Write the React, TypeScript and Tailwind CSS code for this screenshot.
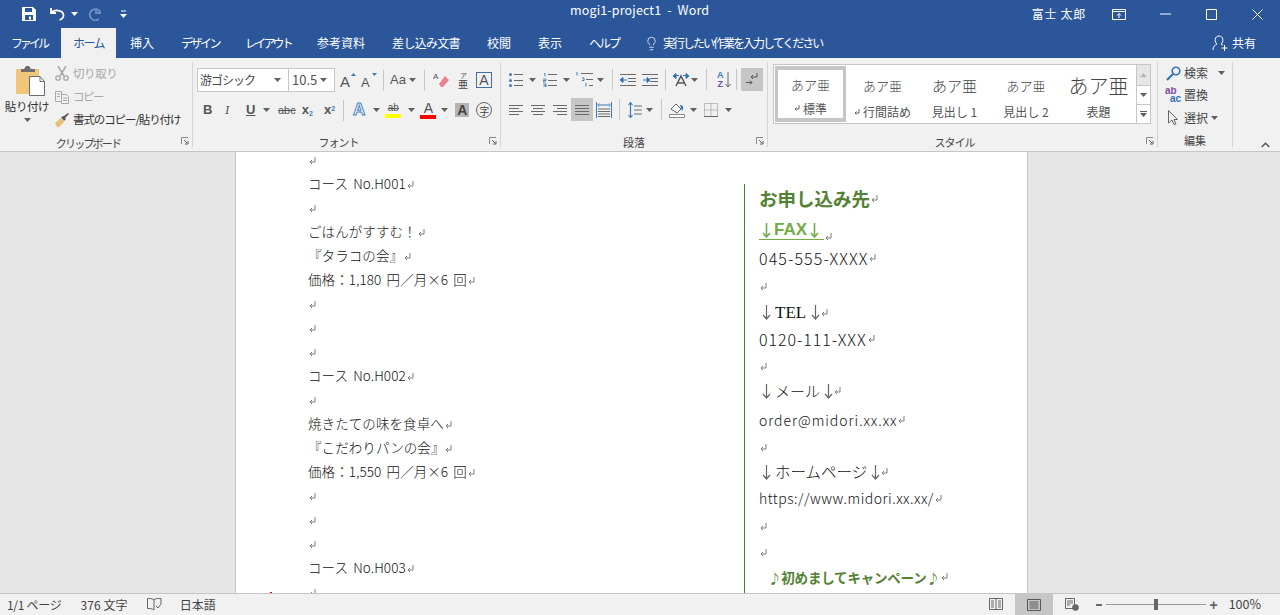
import React from "react";
import { Lightbulb } from "lucide-react";

const FONT = { fontFamily: '"Noto Sans CJK JP", "Liberation Sans", sans-serif' };

type P = { className?: string };

const Caret = ({ className = "", color = "#5f5f5f" }: P & { color?: string }) => (
  <svg className={`shrink-0 ${className}`} width="7" height="4" viewBox="0 0 7 4">
    <path d="M0 0h7L3.500 4z" fill={color} />
  </svg>
);

const Sep = ({ className = "" }: P) => <div className={`w-px h-[21px] bg-[#c6c6c6] shrink-0 ${className}`} />;

// paragraph mark shown at the end of every document line
const Mark = () => (
  <svg className="inline-block ml-px align-baseline shrink-0" width="7" height="8" viewBox="0 0 7 8">
    <path d="M6 0v5H1M3 3L1 5l2 2" fill="none" stroke="#7d7d7d" strokeWidth="1" />
  </svg>
);

// thin down arrow used around the contact headings
const Arrow = ({ className = "", color = "#666", w = 1.2 }: P & { color?: string; w?: number }) => (
  <svg className={`shrink-0 ${className}`} width="9" height="15" viewBox="0 0 9 15">
    <path d="M4.500 0v14M1 10l3.500 4L8 10" fill="none" stroke={color} strokeWidth={w} />
  </svg>
);

// group of horizontal lines, used by the alignment and list buttons
const Lines = ({ className = "", kind = "left" }: P & { kind?: "left" | "center" | "right" | "full" }) => {
  const short = { left: "M0 .5h14M0 3.500h10M0 6.500h14M0 9.500h10", center: "M0 .5h14M2 3.500h10M0 6.500h14M2 9.500h10", right: "M0 .5h14M4 3.500h10M0 6.500h14M4 9.500h10", full: "M0 .5h14M0 3.500h14M0 6.500h14M0 9.500h14" }[kind];
  return (
    <svg className={`shrink-0 ${className}`} width="14" height="10" viewBox="0 0 14 10">
      <path d={short} stroke="#6a6a6a" strokeWidth="1" />
    </svg>
  );
};

const Bullets = ({ className = "" }: P) => (
  <svg className={`shrink-0 ${className}`} width="14" height="14" viewBox="0 0 14 14">
    <path d="M5 1.500h9M5 7.500h9M5 12.500h9" stroke="#6a6a6a" />
    <circle cx="1.500" cy="1.500" r="1.500" fill="#3f7cba" />
    <circle cx="1.500" cy="7.500" r="1.500" fill="#3f7cba" />
    <circle cx="1.500" cy="12.500" r="1.500" fill="#3f7cba" />
  </svg>
);

const Numbering = ({ className = "" }: P) => (
  <svg className={`shrink-0 ${className}`} width="14" height="14" viewBox="0 0 14 14">
    <path d="M5 1.500h9M5 7.500h9M5 12.500h9" stroke="#6a6a6a" />
    <path d="M1 .5h1v3M0 6h3v1.500H0V9h3M0 11h3v3H0M1 12.500h2" fill="none" stroke="#3f7cba" strokeWidth=".9" />
  </svg>
);

const Multilevel = ({ className = "" }: P) => (
  <svg className={`shrink-0 ${className}`} width="18" height="15" viewBox="0 0 18 15">
    <path d="M5 1.500h12M10 7.500h7M13 13.500h4" stroke="#6a6a6a" />
    <path d="M1 0v3.500M6 6h2v2.500H6M10 11v3.500" fill="none" stroke="#3f7cba" strokeWidth="1" />
  </svg>
);

const Indent = ({ className = "", flip = false }: P & { flip?: boolean }) => (
  <svg className={`shrink-0 ${className}`} width="16" height="12" viewBox="0 0 16 12">
    <path d="M0 .5h16M8 4.500h8M8 7.500h8M0 11.500h16" stroke="#6a6a6a" />
    <path d={flip ? "M1 6h4V3.500L8 6 5 8.500V6" : "M7 6H3V3.500L0 6l3 2.500V6"} fill="#2f73b6" stroke="#2f73b6" />
  </svg>
);

const RibbonLabel = ({ children, className = "" }: React.PropsWithChildren<P>) => (
  <div className={`text-[11px] leading-[14px] text-[#444] text-center ${className}`}>{children}</div>
);

const Launcher = ({ className = "" }: P) => (
  <svg className={`absolute right-[3px] bottom-[2px] ${className}`} width="8" height="8" viewBox="0 0 8 8">
    <path d="M.5 7V.5H7" fill="none" stroke="#8a8a8a" />
    <path d="M3 3l3 3M7 4v3H4" fill="none" stroke="#5f5f5f" />
  </svg>
);

function TitleBar() {
  return (
    <div className="h-[28px] flex items-center text-white relative shrink-0">
      <svg className="ml-[22px]" width="14" height="14" viewBox="0 0 14 14">
        <path d="M0 0h11l3 3v11H0z" fill="#fff" />
        <path d="M3 1h7v4H3zM3 8h8v5H3z" fill="#2b579a" />
        <path d="M7 9.500h2v3H7z" fill="#fff" />
      </svg>
      <svg className="ml-[14px]" width="15" height="14" viewBox="0 0 15 14">
        <path d="M1 1v5h5M1.500 5.500C5 2 13 3 13.500 8c.2 2.500-2 4.500-4 5" fill="none" stroke="#fff" strokeWidth="1.800" />
      </svg>
      <Caret className="ml-[6px]" color="#fff" />
      <svg className="ml-[9px]" width="15" height="14" viewBox="0 0 15 14">
        <path d="M9 1v5h5M13.500 5.500A5.600 5.600 0 1 0 12 12" fill="none" stroke="#6f8fbf" strokeWidth="1.800" />
      </svg>
      <svg className="ml-[18px]" width="7" height="8" viewBox="0 0 7 8">
        <path d="M1 1h5" stroke="#fff" />
        <path d="M0 4h7L3.500 8z" fill="#fff" />
      </svg>
      <div className="absolute left-[570px] top-0 text-[12.5px] leading-[20px] whitespace-pre tracking-[0.15px]">mogi1-project1  -  Word</div>
      <div className="ml-auto flex items-center">
        <span className="text-[12px] leading-[20px] tracking-[.7px]">富士 太郎</span>
        <svg className="ml-[26px]" width="14" height="11" viewBox="0 0 14 11">
          <path d="M.5.500h13v10H.5zM.5 2.500h13M7 9V4.500M5 6.500l2-2 2 2" fill="none" stroke="#fff" />
        </svg>
        <svg className="ml-[34px]" width="11" height="2" viewBox="0 0 11 2">
          <path d="M0 1h11" stroke="#fff" />
        </svg>
        <svg className="ml-[35px]" width="11" height="11" viewBox="0 0 11 11">
          <path d="M.5.500h10v10H.5z" fill="none" stroke="#fff" />
        </svg>
        <svg className="ml-[35px] mr-[17px]" width="11" height="11" viewBox="0 0 11 11">
          <path d="M.5.500l10 10M10.500.500l-10 10" stroke="#fff" />
        </svg>
      </div>
    </div>
  );
}

function TabBar() {
  return (
    <div className="h-[30px] flex items-stretch text-white text-[12px] shrink-0">
      <div className="w-[61px] flex items-center justify-center tracking-[-3px] pr-[3px]">ファイル</div>
      <div className="w-[55px] flex items-center justify-center bg-[#f1f1f1] text-[#2b579a] tracking-[-1.500px]">ホーム</div>
      <div className="w-[52px] flex items-center justify-center">挿入</div>
      <div className="w-[64px] flex items-center justify-center tracking-[-2.500px]">デザイン</div>
      <div className="w-[72px] flex items-center justify-center tracking-[-2.800px]">レイアウト</div>
      <div className="w-[74px] flex items-center justify-center">参考資料</div>
      <div className="w-[96px] flex items-center justify-center tracking-[-.7px]">差し込み文書</div>
      <div className="w-[50px] flex items-center justify-center">校閲</div>
      <div className="w-[52px] flex items-center justify-center">表示</div>
      <div className="w-[56px] flex items-center justify-center tracking-[-2px]">ヘルプ</div>
      <div className="ml-[12px] flex items-center">
        <Lightbulb size={15} strokeWidth={1.2} />
        <span className="ml-[4px] tracking-[-2px]">実行したい作業を入力してください</span>
      </div>
      <div className="ml-auto mr-[24px] flex items-center">
        <svg width="16" height="16" viewBox="0 0 16 16">
          <path d="M1 15c0-3.500 2-5 4-6-3-2-2.500-8 2-8s5 6 2 8c1 .4 1.500.8 2 1.300M9.500 13h6M12.500 10v6" fill="none" stroke="#fff" />
        </svg>
        <span className="ml-[4px]">共有</span>
      </div>
    </div>
  );
}

function Clipboard() {
  return (
    <div className="w-[193px] border-r border-[#d4d4d4] my-[4px] relative flex flex-col shrink-0">
      <div className="flex h-[70px]">
        <div className="w-[55px] flex flex-col items-center shrink-0">
          <svg className="mt-[3px] ml-[4px]" width="30" height="31" viewBox="0 0 30 31">
            <path d="M1 4h23v25H1z" fill="#f0c67a" />
            <path d="M6 4h3l2-3h3l2 3h4v3H6z" fill="#6d6d6d" />
            <path d="M14.500 11.500H25l4.500 5v14h-15z" fill="#fff" stroke="#6d6d6d" />
            <path d="M25 11.500v5h4.500" fill="none" stroke="#6d6d6d" />
          </svg>
          <div className="text-[11.5px] leading-[16px] text-[#333] mt-[2px] -ml-px whitespace-nowrap tracking-[-.4px]">貼り付け</div>
          <Caret className="mt-[4px]" />
        </div>
        <div className="flex flex-col text-[11.5px] whitespace-nowrap">
          <div className="h-[23px] flex items-center text-[#a8a8a8] tracking-[-.4px]">
            <svg width="14" height="15" viewBox="0 0 14 15">
              <path d="M3 0l6 10M11 0L5 10" stroke="#a8a8a8" strokeWidth="1.500" />
              <circle cx="3" cy="12" r="2.200" fill="none" stroke="#a8a8a8" strokeWidth="1.300" />
              <circle cx="11" cy="12" r="2.200" fill="none" stroke="#a8a8a8" strokeWidth="1.300" />
            </svg>
            <span className="ml-[4px]">切り取り</span>
          </div>
          <div className="h-[23px] flex items-center text-[#a8a8a8]">
            <svg width="14" height="14" viewBox="0 0 14 14">
              <path d="M.5 1.500h6v10h-6zM6.500 4.500h5l2 2v7h-7zM2 4h3M2 6.500h3M8 8h4M8 10.500h4" fill="none" stroke="#a8a8a8" />
            </svg>
            <span className="ml-[4px] tracking-[-1.500px]">コピー</span>
          </div>
          <div className="h-[23px] flex items-center text-[#333]">
            <svg width="15" height="14" viewBox="0 0 15 14">
              <path d="M0 10l6-5 3 4-5 5H2z" fill="#e8bd74" />
              <path d="M6 4l3 4 2-2-1-1 4-4-1-1-4 3z" fill="#555" />
            </svg>
            <span className="ml-[3px] tracking-[-1.100px]">書式のコピー/貼り付け</span>
          </div>
        </div>
      </div>
      <RibbonLabel className="mt-[5px] pr-[16px] tracking-[-1.800px]">クリップボード</RibbonLabel>
      <Launcher />
    </div>
  );
}

function FontGroup() {
  return (
    <div className="w-[308px] border-r border-[#d4d4d4] my-[4px] relative flex flex-col shrink-0 text-[#555]">
      <div className="h-[24px] mt-[6px] flex items-center">
        <div className="ml-[4px] w-[92px] h-[24px] bg-white border border-[#c6c6c6] flex items-center justify-between pl-[2px] pr-[7px] shrink-0">
          <span className="text-[12px] text-[#444] tracking-[-1px]">游ゴシック</span>
          <Caret />
        </div>
        <div className="-ml-px w-[47px] h-[24px] bg-white border border-[#c6c6c6] flex items-center justify-between pl-[3px] pr-[7px] shrink-0">
          <span className="text-[13px] text-[#555]">10.5</span>
          <Caret />
        </div>
        <div className="ml-[5px] w-[16px] h-[20px] relative shrink-0">
          <span className="absolute left-0 bottom-[-1px] text-[15px] leading-[18px] font-['Liberation_Sans']">A</span>
          <svg className="absolute right-0 top-[3px]" width="5" height="3" viewBox="0 0 5 3"><path d="M0 3L2.500 0 5 3z" fill="#3f7cba" /></svg>
        </div>
        <div className="ml-[5px] w-[16px] h-[20px] relative shrink-0">
          <span className="absolute left-0 bottom-[-1px] text-[13px] leading-[16px] font-['Liberation_Sans']">A</span>
          <svg className="absolute right-0 top-[3px]" width="5" height="3" viewBox="0 0 5 3"><path d="M0 0h5L2.500 3z" fill="#3f7cba" /></svg>
        </div>
        <Sep className="ml-[6px]" />
        <span className="ml-[6px] text-[13px] font-['Liberation_Sans'] w-[16px] shrink-0">Aa</span>
        <Caret className="ml-[3px]" />
        <Sep className="ml-[8px]" />
        <svg className="ml-[8px]" width="16" height="16" viewBox="0 0 16 16">
          <path d="M6 12l6-8 4 4-6 7H8z" fill="#e9828f" />
          <text x="0" y="7" fontSize="8" fill="#555" fontFamily="Liberation Sans">A</text>
        </svg>
        <svg className="ml-[8px] shrink-0" width="12" height="17" viewBox="0 0 12 17">
          <text x="3" y="6" fontSize="7" fill="#555">ア</text>
          <text x="1" y="16" fontSize="10" fill="#444">亜</text>
        </svg>
        <div className="ml-[7px] w-[16px] h-[16px] border border-[#3f6fa8] flex items-center justify-center text-[14px] leading-none font-['Liberation_Sans'] shrink-0">A</div>
      </div>
      <div className="h-[24px] mt-[6px] flex items-center font-['Liberation_Sans']">
        <span className="ml-[10px] w-[8px] text-[13px] font-bold">B</span>
        <span className="ml-[14px] w-[6px] text-[13px] italic font-serif">I</span>
        <span className="ml-[15px] w-[10px] text-[13px] font-bold underline">U</span>
        <Caret className="ml-[7px]" />
        <span className="ml-[8px] text-[11px] line-through">abc</span>
        <span className="ml-[6px] text-[13px] font-bold">x<sub className="text-[7px] text-[#3f7cba]">2</sub></span>
        <span className="ml-[11px] text-[13px] font-bold">x<sup className="text-[7px] text-[#3f7cba]">2</sup></span>
        <Sep className="ml-[8px]" />
        <span className="ml-[9px] text-[17px] font-bold text-[#fff] [-webkit-text-stroke:1px_#4a80bd]">A</span>
        <Caret className="ml-[8px]" />
        <div className="ml-[5px] w-[16px] flex flex-col items-center shrink-0">
          <span className="text-[10px] leading-[12px] line-through">ab</span>
          <div className="w-[16px] h-[4px] bg-[#ffff00]" />
        </div>
        <Caret className="ml-[7px]" />
        <div className="ml-[5px] w-[16px] flex flex-col items-center shrink-0">
          <span className="text-[14px] leading-[13px]">A</span>
          <div className="w-[16px] h-[4px] bg-[#ff0000]" />
        </div>
        <Caret className="ml-[5px]" />
        <div className="ml-[7px] w-[14px] h-[14px] bg-[#b5b5b5] flex items-center justify-center text-[14px] font-bold text-[#444] shrink-0">A</div>
        <div className="ml-[7px] w-[16px] h-[16px] rounded-full border border-[#666] flex items-center justify-center text-[10px] text-[#444] shrink-0" style={FONT}>字</div>
      </div>
      <RibbonLabel className="mt-[13px] pr-[16px] tracking-[-1px]">フォント</RibbonLabel>
      <Launcher />
    </div>
  );
}

function ParagraphGroup() {
  return (
    <div className="w-[267px] border-r border-[#d4d4d4] my-[4px] relative flex flex-col shrink-0 text-[#555]">
      <div className="h-[24px] mt-[6px] flex items-center">
        <Bullets className="ml-[8px]" />
        <Caret className="ml-[6px]" />
        <Numbering className="ml-[7px]" />
        <Caret className="ml-[6px]" />
        <Multilevel className="ml-[6px]" />
        <Caret className="ml-[3px]" />
        <Sep className="ml-[8px]" />
        <Indent className="ml-[7px]" />
        <Indent className="ml-[6px]" flip />
        <Sep className="ml-[7px]" />
        <svg className="ml-[7px]" width="16" height="14" viewBox="0 0 16 14">
          <path d="M3 13L8 3l5 10M5 10h6" fill="none" stroke="#555" strokeWidth="1.500" />
          <path d="M0 3l3-2.500v5zM16 3l-3-2.500v5zM3 2.500h3M10 2.500h3" fill="#2f73b6" stroke="#2f73b6" />
        </svg>
        <Caret className="ml-[2px]" />
        <Sep className="ml-[8px]" />
        <div className="ml-[10px] w-[14px] flex items-center shrink-0">
          <div className="flex flex-col items-center font-['Liberation_Sans'] text-[9px] leading-[9px] font-bold">
            <span className="text-[#3f7cba]">A</span>
            <span className="text-[#7b4fa8]">Z</span>
          </div>
          <svg className="ml-[1px]" width="6" height="16" viewBox="0 0 6 16"><path d="M3 0v15M.5 12L3 15l2.500-3" fill="none" stroke="#666" /></svg>
        </div>
        <Sep className="ml-[5px]" />
        <div className="ml-[4px] w-[22px] h-[23px] bg-[#c6c6c6] flex items-center justify-center shrink-0">
          <svg width="12" height="13" viewBox="0 0 12 13">
            <path d="M11 0v4H5M7 2L5 4l2 2M0 9.500h6M4 7.500l2 2-2 2" fill="none" stroke="#555" />
          </svg>
        </div>
      </div>
      <div className="h-[24px] mt-[7px] flex items-center">
        <Lines className="ml-[8px]" />
        <Lines className="ml-[8px]" kind="center" />
        <Lines className="ml-[8px]" kind="right" />
        <div className="ml-[4px] w-[22px] h-[23px] bg-[#c6c6c6] flex items-center justify-center shrink-0">
          <Lines kind="full" />
        </div>
        <svg className="ml-[3px]" width="16" height="16" viewBox="0 0 16 16">
          <path d="M.5 0v16M15.500 0v16" stroke="#3f7cba" />
          <path d="M3 3h10M3 1.500L1.800 3 3 4.500M13 1.500L14.200 3 13 4.500" fill="none" stroke="#3f7cba" />
          <path d="M2 7h12M2 9.500h12M2 12h12M2 14.500h12" stroke="#6a6a6a" />
        </svg>
        <Sep className="ml-[7px]" />
        <svg className="ml-[8px]" width="14" height="16" viewBox="0 0 14 16">
          <path d="M2.500 1v14M.5 3L2.500.5 4.500 3M.5 13l2 2.500 2-2.500" fill="none" stroke="#3f7cba" strokeWidth="1.200" />
          <path d="M6 4h8M6 8h8M6 12h8" stroke="#6a6a6a" />
        </svg>
        <Caret className="ml-[4px]" />
        <Sep className="ml-[8px]" />
        <svg className="ml-[7px]" width="16" height="16" viewBox="0 0 16 16">
          <path d="M2 7l5-5 5 5-4 4z" fill="#fff" stroke="#666" />
          <path d="M11 3a3 3 0 0 1 3 4l-1 2z" fill="#2f73b6" />
          <path d="M.5 12.500h15v3H.5z" fill="#fff" stroke="#888" />
        </svg>
        <Caret className="ml-[5px]" />
        <svg className="ml-[7px]" width="14" height="14" viewBox="0 0 14 14">
          <path d="M.5.500h13v13H.5zM7 .500v13M.5 7h13" fill="none" stroke="#8a8a8a" strokeDasharray="1 1" />
          <path d="M0 13.500h14" stroke="#666" />
        </svg>
        <Caret className="ml-[7px]" />
      </div>
      <RibbonLabel className="mt-[14px]">段落</RibbonLabel>
      <Launcher />
    </div>
  );
}

const StyleItem = ({ sample, label, mark, className = "" }: { sample: React.ReactNode; label: string; mark?: boolean; className?: string }) => (
  <div className={`flex flex-col items-center shrink-0 ${className}`}>
    <div className="h-[32px] flex items-center">{sample}</div>
    <div className="h-[20px] flex items-center text-[12px] text-[#555]">
      {mark && (
        <svg className="mr-[3px]" width="6" height="7" viewBox="0 0 6 7"><path d="M5 0v4H1M2.500 2.500L1 4l1.500 1.500" fill="none" stroke="#666" /></svg>
      )}
      {label}
    </div>
  </div>
);

function StylesGroup() {
  return (
    <div className="w-[390px] border-r border-[#d4d4d4] my-[4px] relative flex flex-col shrink-0">
      <div className="ml-[5px] mt-[2px] w-[378px] h-[60px] bg-white border border-[#c6c6c6] flex shrink-0">
        <div className="flex p-px">
          <StyleItem className="w-[71px] border-x-[3px] border-y-[4px] border-[#c6c6c6]" sample={<span className="text-[13px] font-light text-[#444]">あア亜</span>} label="標準" mark />
          <StyleItem className="w-[73px] pt-[4px]" sample={<span className="text-[13px] font-light text-[#444]">あア亜</span>} label="行間詰め" mark />
          <StyleItem className="w-[71px] pt-[4px]" sample={<span className="text-[15px] font-light text-[#444]">あア亜</span>} label="見出し 1" />
          <StyleItem className="w-[72px] pt-[4px]" sample={<span className="text-[13px] font-light text-[#444]">あア亜</span>} label="見出し 2" />
          <StyleItem className="w-[73px] pt-[4px]" sample={<span className="text-[20px] font-light text-[#444]">あア亜</span>} label="表題" />
        </div>
        <div className="ml-auto w-[14px] border-l border-[#c6c6c6] flex flex-col shrink-0">
          <div className="h-[21px] bg-[#e6e6e6] border-b border-[#c6c6c6] flex items-center justify-center">
            <svg width="7" height="4" viewBox="0 0 7 4"><path d="M0 4h7L3.500 0z" fill="#b5b5b5" /></svg>
          </div>
          <div className="h-[19px] border-b border-[#c6c6c6] flex items-center justify-center"><Caret /></div>
          <div className="flex-1 flex flex-col items-center justify-center">
            <div className="w-[7px] h-px bg-[#5f5f5f] mb-[1px]" />
            <Caret />
          </div>
        </div>
      </div>
      <RibbonLabel className="mt-[11px] pr-[16px] tracking-[-1px]">スタイル</RibbonLabel>
      <Launcher />
    </div>
  );
}

function EditGroup() {
  return (
    <div className="w-[75px] border-r border-[#d4d4d4] my-[4px] flex flex-col shrink-0 text-[12px] text-[#444]">
      <div className="h-[23px] flex items-center">
        <svg className="ml-[8px]" width="15" height="15" viewBox="0 0 15 15">
          <circle cx="10" cy="5" r="3.800" fill="none" stroke="#2f73b6" strokeWidth="1.600" />
          <path d="M7 8l-6 6" stroke="#2f73b6" strokeWidth="2.200" />
        </svg>
        <span className="ml-[3px]">検索</span>
        <Caret className="ml-[10px]" />
      </div>
      <div className="h-[23px] flex items-center">
        <svg className="ml-[7px] shrink-0" width="17" height="16" viewBox="0 0 17 16" fontFamily="Liberation Sans" fontWeight="700">
          <text x="0" y="7" fontSize="10" fill="#7b4fa8">ab</text>
          <text x="5" y="15" fontSize="10" fill="#2f73b6">ac</text>
        </svg>
        <span className="ml-[2px]">置換</span>
      </div>
      <div className="h-[23px] flex items-center">
        <svg className="ml-[10px]" width="10" height="15" viewBox="0 0 10 15">
          <path d="M.5.500l9 9H6l2 4.500-2 .5-2-4.500-3.500 3z" fill="#f1f1f1" stroke="#666" />
        </svg>
        <span className="ml-[6px]">選択</span>
        <Caret className="ml-[3px]" />
      </div>
      <RibbonLabel className="mt-[4px]">編集</RibbonLabel>
    </div>
  );
}

function Ribbon() {
  return (
    <div className="h-[94px] bg-[#f1f1f1] border-b border-[#c6c6c6] flex shrink-0">
      <Clipboard />
      <FontGroup />
      <ParagraphGroup />
      <StylesGroup />
      <EditGroup />
      <div className="ml-auto mr-[10px] self-end mb-[3px]">
        <svg width="9" height="6" viewBox="0 0 9 6"><path d="M.7 5l3.800-3.800L8.300 5" fill="none" stroke="#555" strokeWidth="1.500" /></svg>
      </div>
    </div>
  );
}

const LEFT_LINES = ["", "コース No.H001", "", "ごはんがすすむ！", "『タラコの会』", "価格：1,180 円／月×6 回", "", "", "", "コース No.H002", "", "焼きたての味を食卓へ", "『こだわりパンの会』", "価格：1,550 円／月×6 回", "", "", "", "コース No.H003", ""];

function Page() {
  return (
    <div className="ml-[235px] w-[793px] bg-white border-x border-[#c6c6c6] relative flex overflow-hidden shrink-0">
      <div className="-mt-[5px] pl-[72px] w-[508px] text-[13.5px] font-light leading-[24px] text-[#111] tracking-[.08px] [word-spacing:2px] shrink-0">
        {LEFT_LINES.map((t, i) => (
          <div key={i} className="h-[24px] whitespace-nowrap">
            {t}
            <Mark />
          </div>
        ))}
      </div>
      <div className="mt-[32px] border-l border-[#4f7a2c] pl-[14px] w-[270px] flex flex-col text-[#111] font-light whitespace-nowrap">
        <div className="h-[29px] flex items-center text-[18.500px] font-bold text-[#538135]">お申し込み先<Mark /></div>
        <div className="h-[30px] flex items-start text-[#70ad47]">
          <span className="border-b border-[#70ad47] h-[27px] pt-[8px] w-[65px] flex items-center">
            <Arrow className="ml-[3px]" color="#70ad47" w={1.6} />
            <span className="ml-[3px] text-[17px] font-bold font-['Liberation_Sans']">FAX</span>
            <Arrow className="ml-[3px]" color="#70ad47" w={1.6} />
          </span>
          <span className="mt-[9px]"><Mark /></span>
        </div>
        <div className="h-[30px] flex items-center text-[16px] tracking-[1.100px]">045-555-XXXX<Mark /></div>
        <div className="h-[27px] flex items-center"><Mark /></div>
        <div className="h-[25px] flex items-center text-[17px] font-['Liberation_Serif']">
          <Arrow className="ml-[3px]" />
          <span className="ml-[4px]">TEL</span>
          <Arrow className="ml-[5px]" />
          <Mark />
        </div>
        <div className="h-[28px] flex items-center text-[16px] tracking-[.95px]">0120-111-XXX<Mark /></div>
        <div className="h-[27px] flex items-center"><Mark /></div>
        <div className="h-[26px] flex items-center text-[15px] -translate-y-[2px]">
          <Arrow className="ml-[3px]" />
          <span className="ml-[4px]">メール</span>
          <Arrow className="ml-[4px]" />
          <Mark />
        </div>
        <div className="h-[28px] flex items-center text-[14px] tracking-[.95px]">order@midori.xx.xx<Mark /></div>
        <div className="h-[27px] flex items-center"><Mark /></div>
        <div className="h-[26px] flex items-center text-[15.500px] -translate-y-[2px]">
          <Arrow className="ml-[3px]" />
          <span className="ml-[4px]">ホームページ</span>
          <Arrow className="ml-[4px]" />
          <Mark />
        </div>
        <div className="h-[27px] flex items-center text-[14px] tracking-[.5px] -translate-y-[2px]">https://www.midori.xx.xx/<Mark /></div>
        <div className="h-[26px] flex items-center"><Mark /></div>
        <div className="h-[26px] flex items-center"><Mark /></div>
        <div className="h-[26px] flex items-center pl-[9px] text-[13.500px] tracking-[-.2px] font-bold text-[#538135] -translate-y-[2px]">♪初めましてキャンペーン♪<Mark /></div>
      </div>
      <div className="absolute left-[34px] bottom-0 w-[2px] h-px bg-[#ff0000]" />
    </div>
  );
}

function StatusBar() {
  return (
    <div className="h-[22px] bg-[#f1f1f1] border-t border-[#c6c6c6] flex items-center text-[12px] text-[#444] shrink-0">
      <span className="ml-[7px] tracking-[-.3px]">1/1 ページ</span>
      <span className="ml-[19px] tracking-[.1px]">376 文字</span>
      <svg className="ml-[19px]" width="15" height="13" viewBox="0 0 15 13">
        <path d="M7 1.500C5 .5 3 .5.500.5v10C3 10.500 5 10.500 7 12V1.500C9 .5 11 .5 14 .5V6" fill="none" stroke="#666" />
        <path d="M9 8l2 2 3-4" fill="none" stroke="#666" />
      </svg>
      <span className="ml-[18px]">日本語</span>
      <div className="ml-auto flex items-center h-full">
        <svg width="14" height="13" viewBox="0 0 14 13">
          <path d="M.5.500h13v11H.5zM7 .500v11M2 3h3M2 5h3M2 7h3M2 9h3M9 3h3M9 5h3M9 7h3M9 9h3" fill="none" stroke="#666" />
        </svg>
        <div className="ml-[12px] w-[38px] h-full bg-[#c6c6c6] flex items-center justify-center">
          <svg width="14" height="12" viewBox="0 0 14 12">
            <path d="M.5.500h13v11H.5zM2.500 3h9M2.500 5h9M2.500 7h9M2.500 9h9" fill="none" stroke="#555" />
          </svg>
        </div>
        <svg className="ml-[12px]" width="14" height="13" viewBox="0 0 14 13">
          <path d="M.5.500h9v10H.5zM2 3h6M2 5h6M2 7h3" fill="none" stroke="#666" />
          <circle cx="10.500" cy="9.500" r="3.300" fill="#666" />
        </svg>
        <div className="ml-[17px] w-[6px] h-[2px] bg-[#666]" />
        <div className="ml-[4px] w-[100px] h-px bg-[#999] relative">
          <div className="absolute left-[48px] -top-[5px] w-[4px] h-[11px] bg-[#666]" />
        </div>
        <span className="ml-[3px] text-[14px] leading-none font-bold text-[#666] font-['Liberation_Sans']">+</span>
        <span className="ml-[11px] mr-[19px] text-[12.500px]">100%</span>
      </div>
    </div>
  );
}

export default function App() {
  return (
    <div className="w-[1280px] h-[615px] bg-[#2b579a] flex flex-col overflow-hidden" style={FONT}>
      <TitleBar />
      <TabBar />
      <Ribbon />
      <div className="flex-1 min-h-0 bg-[#e6e6e6] flex">
        <Page />
      </div>
      <StatusBar />
    </div>
  );
}
